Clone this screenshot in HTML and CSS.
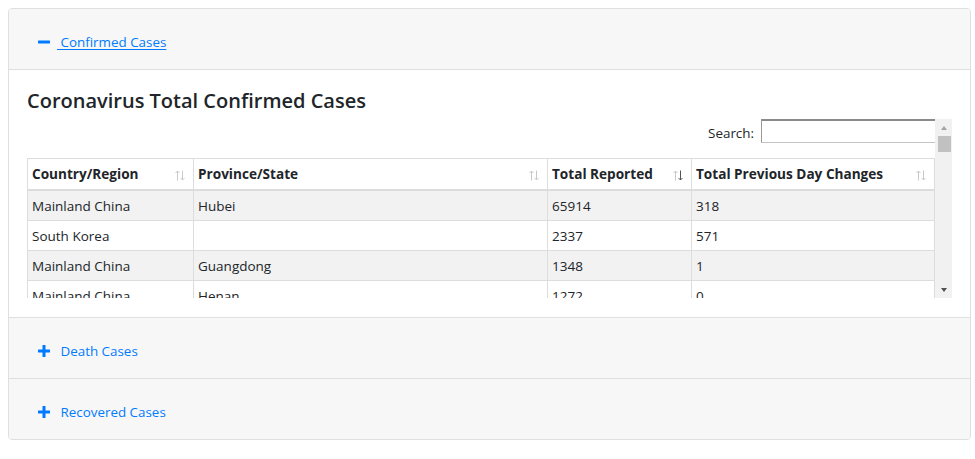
FILE: index.html
```html
<!DOCTYPE html>
<html lang="en">
<head>
<meta charset="utf-8">
<title>Coronavirus Cases</title>
<link rel="stylesheet" href="styles.css">
</head>
<body>
<div class="card">
  <div class="card-header">
    <a class="toggle active" href="#"><svg class="icon" width="12" height="12" viewBox="0 0 12 12"><rect x="0" y="4.5" width="12" height="3" rx="0.5"/></svg> Confirmed Cases</a>
  </div>
  <div class="card-body">
    <h4 class="title">Coronavirus Total Confirmed Cases</h4>
    <div class="scroller">
      <div class="scroll-content">
        <div class="search-row">
          <label class="search-label" for="q">Search:</label>
          <input class="search-input" id="q" type="search">
        </div>
        <table class="data">
          <colgroup>
            <col class="c1"><col class="c2"><col class="c3"><col class="c4">
          </colgroup>
          <thead>
            <tr>
              <th><div class="th-inner"><span>Country/Region</span><svg class="sort" width="10" height="11" viewBox="0 0 10 11"><path class="up" d="M2.5 10.5V1M0.5 3L2.5 1L4.5 3"/><path class="down" d="M7.5 0.5V10M5.5 8L7.5 10L9.5 8"/></svg></div></th>
              <th><div class="th-inner"><span>Province/State</span><svg class="sort" width="10" height="11" viewBox="0 0 10 11"><path class="up" d="M2.5 10.5V1M0.5 3L2.5 1L4.5 3"/><path class="down" d="M7.5 0.5V10M5.5 8L7.5 10L9.5 8"/></svg></div></th>
              <th><div class="th-inner"><span>Total Reported</span><svg class="sort desc" width="10" height="11" viewBox="0 0 10 11"><path class="up" d="M2.5 10.5V1M0.5 3L2.5 1L4.5 3"/><path class="down" d="M7.5 0.5V10M5.5 8L7.5 10L9.5 8"/></svg></div></th>
              <th><div class="th-inner"><span>Total Previous Day Changes</span><svg class="sort" width="10" height="11" viewBox="0 0 10 11"><path class="up" d="M2.5 10.5V1M0.5 3L2.5 1L4.5 3"/><path class="down" d="M7.5 0.5V10M5.5 8L7.5 10L9.5 8"/></svg></div></th>
            </tr>
          </thead>
          <tbody>
            <tr><td>Mainland China</td><td>Hubei</td><td>65914</td><td>318</td></tr>
            <tr><td>South Korea</td><td></td><td>2337</td><td>571</td></tr>
            <tr><td>Mainland China</td><td>Guangdong</td><td>1348</td><td>1</td></tr>
            <tr><td>Mainland China</td><td>Henan</td><td>1272</td><td>0</td></tr>
          </tbody>
        </table>
      </div>
      <div class="scrollbar">
        <div class="sb-btn"><span class="tri-up"></span></div>
        <div class="sb-thumb"></div>
        <div class="sb-track"></div>
        <div class="sb-btn"><span class="tri-down"></span></div>
      </div>
    </div>
  </div>
  <div class="card-header">
    <a class="toggle" href="#"><svg class="icon" width="12" height="12" viewBox="0 0 12 12"><rect x="0" y="4.5" width="12" height="3" rx="0.5"/><rect x="4.5" y="0" width="3" height="12" rx="0.5"/></svg> Death Cases</a>
  </div>
  <div class="card-header last">
    <a class="toggle" href="#"><svg class="icon" width="12" height="12" viewBox="0 0 12 12"><rect x="0" y="4.5" width="12" height="3" rx="0.5"/><rect x="4.5" y="0" width="3" height="12" rx="0.5"/></svg> Recovered Cases</a>
  </div>
</div>
</body>
</html>
```
FILE: styles.css
```css
html, body {
  margin: 0;
  padding: 0;
  background: #ffffff;
}
body {
  padding: 8px;
  font-family: "Open Sans", "Noto Sans", sans-serif;
  color: #212529;
}
.card {
  width: 963px;
  box-sizing: border-box;
  border: 1px solid #dfdfdf;
  border-radius: 4px;
  overflow: hidden;
  background: #ffffff;
}
.card-header {
  height: 61px;
  box-sizing: border-box;
  padding: 23px 0 0 29px;
  background: #f7f7f7;
  border-bottom: 1px solid #dfdfdf;
  font-size: 13.4px;
  line-height: 20px;
}
.card-header.last {
  height: 60px;
  border-bottom: none;
}
.toggle {
  color: #007bff;
  text-decoration: none;
}
.toggle.active {
  text-decoration: underline;
  text-underline-offset: 2px;
}
.icon {
  display: inline-block;
  vertical-align: -1px;
  margin-right: 7px;
  fill: #007bff;
}
.card-body {
  padding: 18px 18px 19px 18px;
  border-bottom: 1px solid #dfdfdf;
}
.title {
  margin: 0 0 6px 0;
  font-size: 20px;
  line-height: 25px;
  font-weight: 600;
  color: #212529;
}
.scroller {
  display: flex;
  height: 179px;
}
.scroll-content {
  flex: 1;
  overflow: hidden;
}
.search-row {
  display: flex;
  justify-content: flex-end;
  align-items: flex-start;
  height: 24px;
  margin-bottom: 15px;
  margin-right: -6px;
}
.search-label {
  font-size: 13.4px;
  line-height: 20px;
  padding-top: 4px;
  margin-right: 7px;
}
.search-input {
  box-sizing: border-box;
  width: 180px;
  height: 24px;
  margin: 0;
  padding: 0 4px;
  border: 1px solid #c4c4c4;
  border-top: 2px solid #8a8a8a;
  border-left-color: #9a9a9a;
  background: #ffffff;
  outline: none;
}
.data {
  width: 907px;
  table-layout: fixed;
  border-collapse: collapse;
  font-size: 13.5px;
}
.c1 { width: 166px; }
.c2 { width: 354px; }
.c3 { width: 144px; }
.c4 { width: 243px; }
.data th, .data td {
  border: 1px solid #dddddd;
  text-align: left;
  white-space: nowrap;
  overflow: hidden;
}
.data th {
  padding: 5px 8px 5px 4px;
  line-height: 20px;
  font-weight: 700;
  font-size: 13.6px;
  border-bottom: 2px solid #dcdcdc;
}
.th-inner {
  display: flex;
  justify-content: space-between;
  align-items: center;
}
.data td {
  padding: 5px 4px 4px 4px;
  line-height: 20px;
}
.data tbody tr:nth-child(odd) td {
  background: #f2f2f2;
}
.sort {
  flex: none;
  fill: none;
  stroke-width: 1;
  margin-top: 2px;
}
.sort path {
  stroke: #c9c9c9;
}
.sort.desc .down {
  stroke: #555555;
}
.scrollbar {
  width: 17px;
  flex: none;
  display: flex;
  flex-direction: column;
  background: #f1f1f1;
}
.sb-btn {
  height: 17px;
  flex: none;
  display: flex;
  align-items: center;
  justify-content: center;
}
.tri-up {
  width: 0;
  height: 0;
  border-left: 3.5px solid transparent;
  border-right: 3.5px solid transparent;
  border-bottom: 4px solid #a3a3a3;
}
.tri-down {
  width: 0;
  height: 0;
  border-left: 3.5px solid transparent;
  border-right: 3.5px solid transparent;
  border-top: 4px solid #505050;
}
.sb-thumb {
  height: 16px;
  margin: 0 1px 0 3px;
  background: #c1c1c1;
  flex: none;
}
.sb-track {
  flex: 1;
}
```
